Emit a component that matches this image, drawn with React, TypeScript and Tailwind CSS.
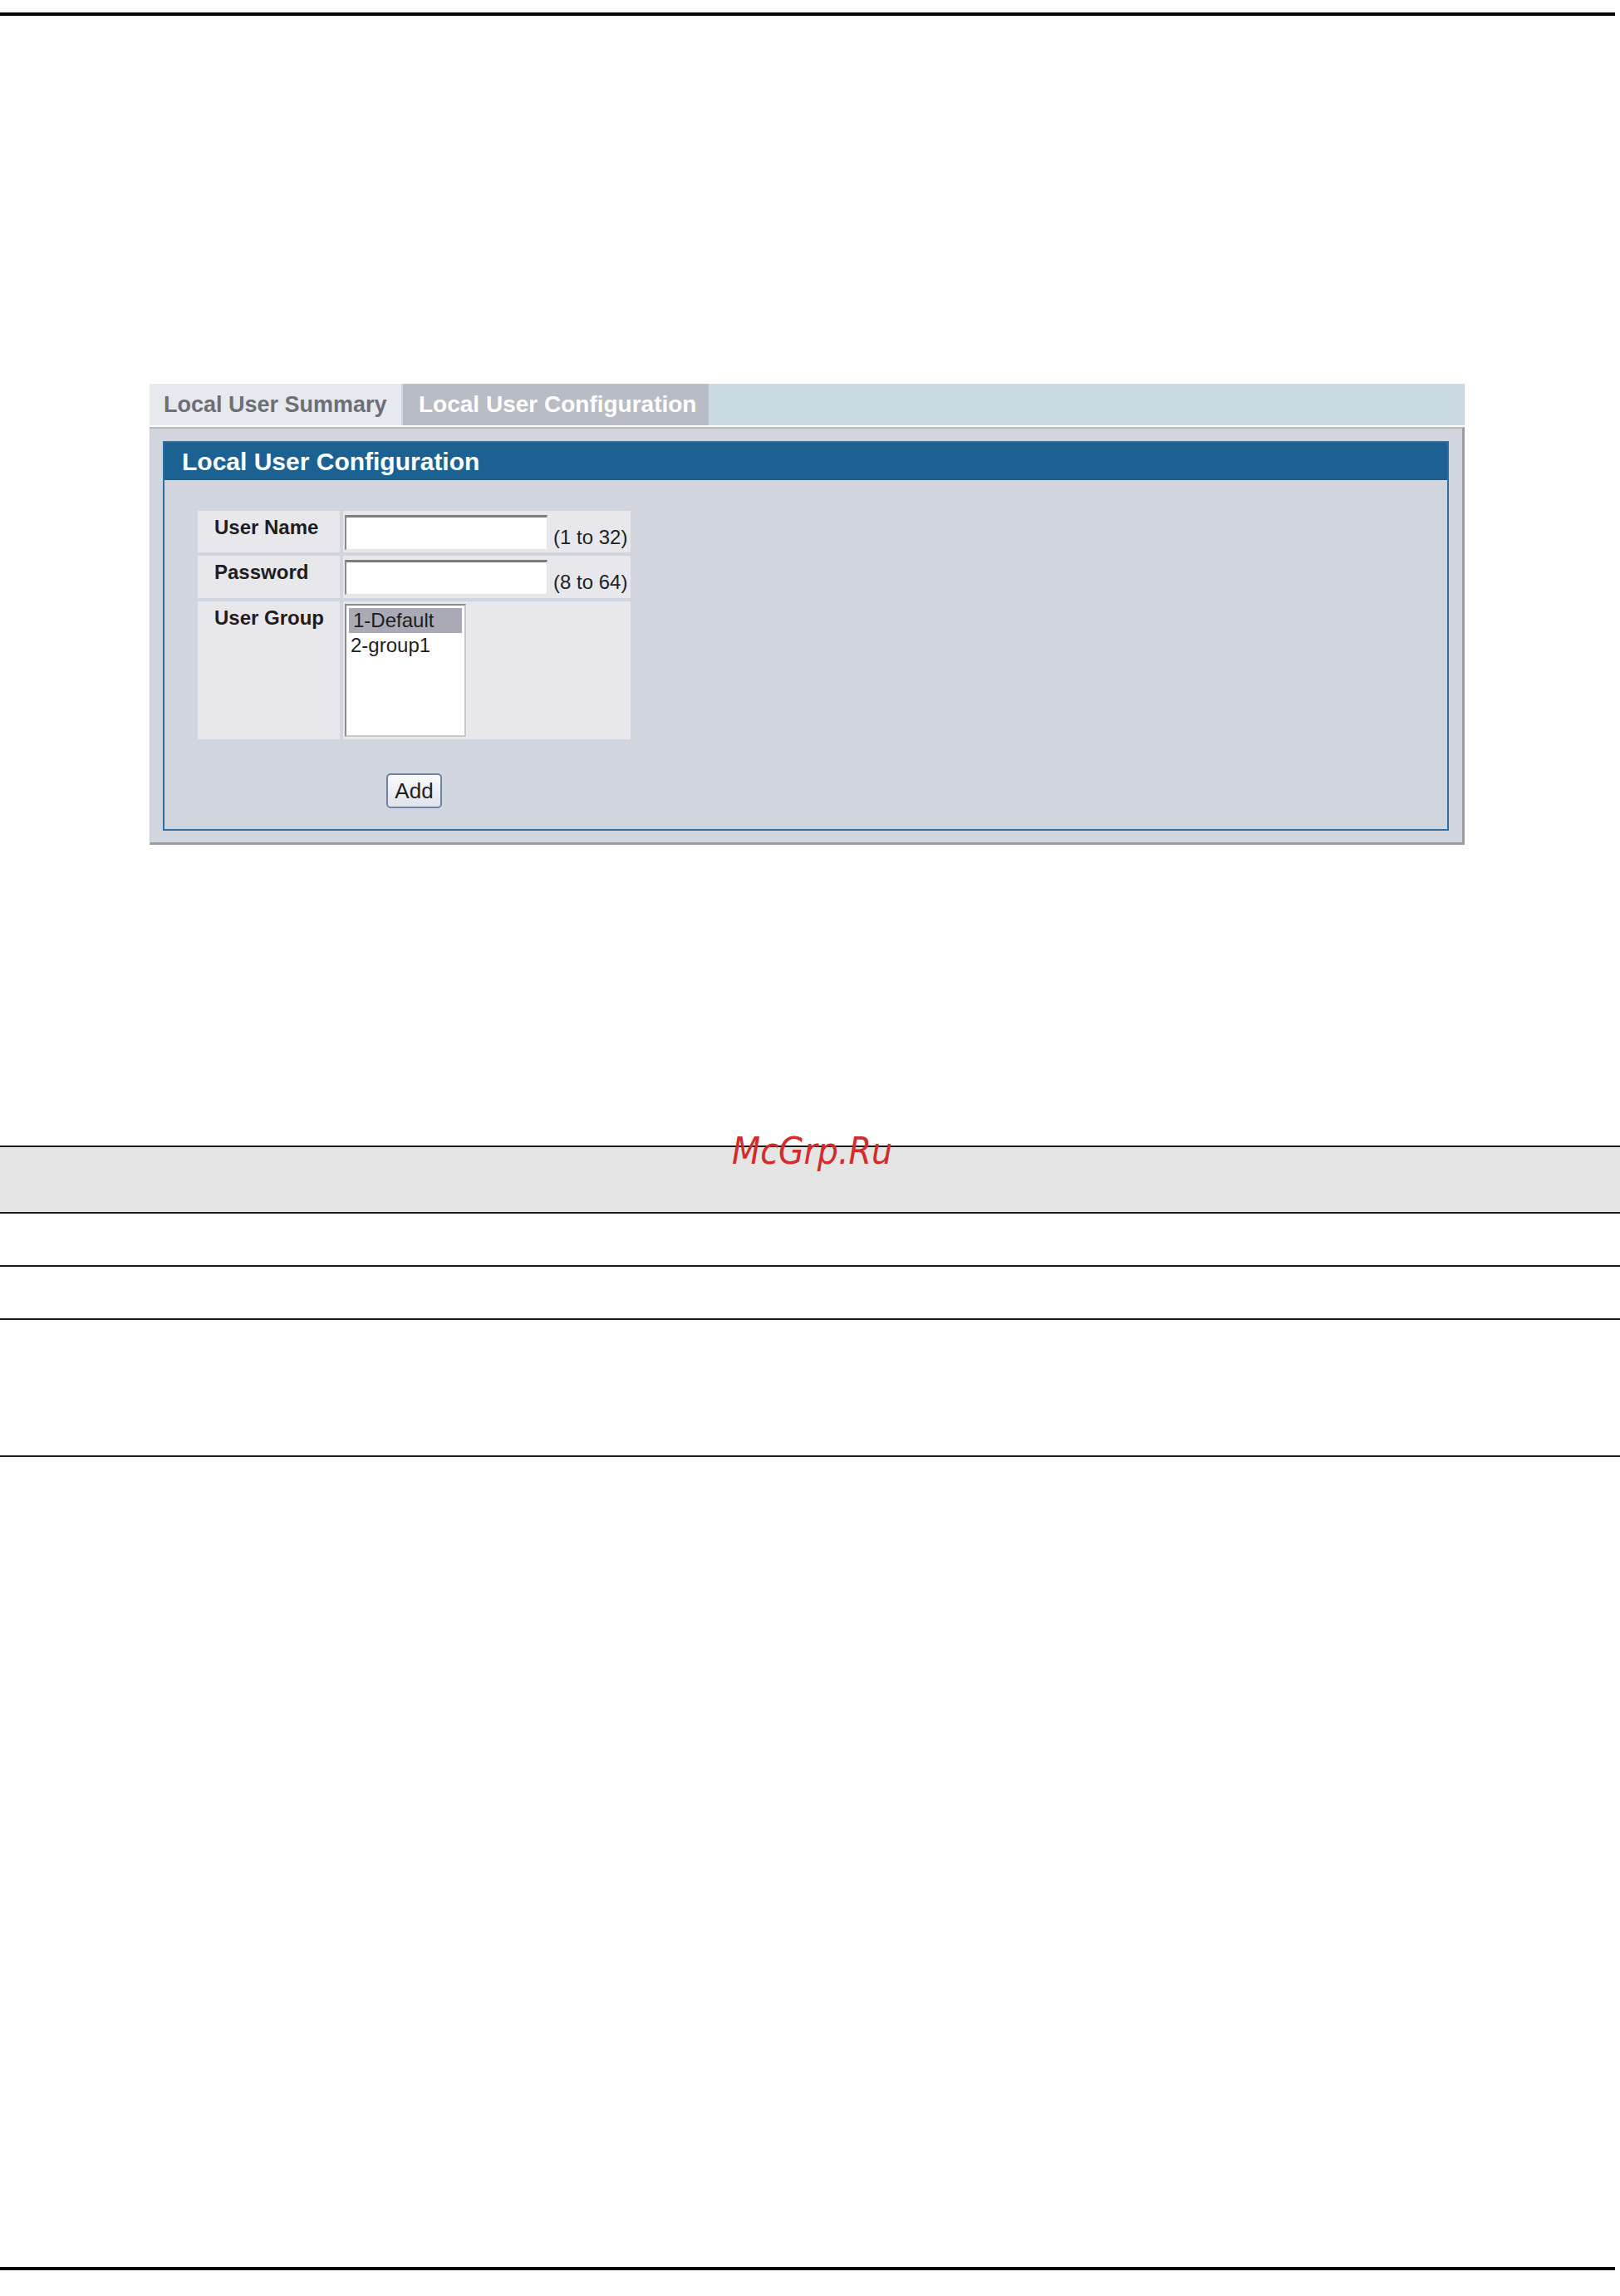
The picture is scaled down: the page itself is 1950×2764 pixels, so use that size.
import React from "react";

const ui = "font-['Liberation_Sans',Arial,sans-serif]";

function FormRow({
  label,
  height,
  children,
}: {
  label: string;
  height: string;
  children: React.ReactNode;
}) {
  return (
    <div className={`flex gap-[4px] ${height}`}>
      <div className="w-[171px] bg-[#e8e8ec] pl-[20px] pt-[6px] text-[24px] font-bold text-[#1e1e1e] leading-[27px]">
        {label}
      </div>
      <div className="w-[346px] bg-[#e8e8ec]">{children}</div>
    </div>
  );
}

function TextField({ hint }: { hint: string }) {
  return (
    <div className="flex items-end pl-[2px] pt-[5px]">
      <div className="w-[244px] h-[42px] bg-white border-t-[3px] border-l-[2px] border-b border-r border-t-[#7d7d7d] border-l-[#8a8a8a] border-b-[#e4e4e4] border-r-[#e4e4e4]" />
      <span className="ml-[7px] mb-[2px] text-[24px] leading-[27px] text-[#222]">{hint}</span>
    </div>
  );
}

export default function App() {
  return (
    <div className={`relative w-[1950px] h-[2764px] bg-[#fefefe] ${ui}`}>
      {/* page rule */}
      <div className="pt-[15px]">
        <div className="w-[1944px] h-[4px] bg-black" />
      </div>

      {/* screenshot panel */}
      <div className="ml-[180px] mt-[443px] w-[1583px]">
        <div className="flex h-[52px] bg-[#cbd9e3] border-b-2 border-white">
          <div className="w-[303px] bg-[#e6e9ee] pl-[17px] flex items-center text-[27px] font-bold text-[#6e6e75]">
            Local User Summary
          </div>
          <div className="ml-[2px] w-[368px] bg-[#b8bcc4] pl-[19px] flex items-center text-[28px] font-bold text-white">
            Local User Configuration
          </div>
        </div>
        <div className="bg-[#d0d5de] border-t-2 border-t-[#b4b8c0] border-l border-l-[#c4c8d0] border-r-[3px] border-r-[#9a9ca4] border-b-[3px] border-b-[#9a9ca4] pl-[15px] pr-[16px] pt-[15px] pb-[14px]">
          <div className="border-2 border-[#2c6fa5]">
            <div className="h-[45px] bg-[#1b6293] pl-[21px] flex items-center text-[30px] font-bold text-white">
              Local User Configuration
            </div>
            <div className="pl-[40px] pt-[37px] pb-[25px]">
              <div className="flex flex-col gap-[4px]">
                <FormRow label="User Name" height="h-[50px]">
                  <TextField hint="(1 to 32)" />
                </FormRow>
                <FormRow label="Password" height="h-[51px]">
                  <TextField hint="(8 to 64)" />
                </FormRow>
                <FormRow label="User Group" height="h-[166px]">
                  <div className="pl-[2px] pt-[3px]">
                    <div className="w-[146px] h-[160px] bg-white border-2 border-t-[#8c8c8c] border-l-[#8c8c8c] border-b-[#c8c8c8] border-r-[#c8c8c8] p-[3px] text-[24px] leading-[30px] text-[#1e1e1e]">
                      <div className="bg-[#a9aab5] pl-[5px]">1-Default</div>
                      <div className="pl-[2px]">2-group1</div>
                    </div>
                  </div>
                </FormRow>
              </div>
              <div className="mt-[41px] ml-[227px]">
                <button className="w-[67px] h-[42px] rounded-[5px] border-2 border-[#6d84a8] bg-gradient-to-b from-[#fafbfd] to-[#dfe3ea] text-[26px] text-[#1e1e1e] leading-none">
                  Add
                </button>
              </div>
            </div>
          </div>
        </div>
      </div>

      {/* table rules */}
      <div className="mt-[362px]">
        <div className="h-[2px] bg-[#1a1a1a]" />
        <div className="h-[78px] bg-[#e5e5e5]" />
        <div className="h-[2px] bg-[#1a1a1a]" />
        <div className="h-[62px]" />
        <div className="h-[2px] bg-[#1a1a1a]" />
        <div className="h-[62px]" />
        <div className="h-[2px] bg-[#1a1a1a]" />
        <div className="h-[163px]" />
        <div className="h-[2px] bg-[#1a1a1a]" />
      </div>

      <div className="absolute left-0 top-[2729px] w-[1944px] h-[4px] bg-black" />

      {/* watermark */}
      <div className="absolute left-[881px] top-[1364px] text-[44px] italic text-[#d42b2b] font-['DejaVu_Sans_Condensed','DejaVu_Sans',sans-serif] [font-stretch:condensed] leading-none">
        McGrp.Ru
      </div>
    </div>
  );
}
